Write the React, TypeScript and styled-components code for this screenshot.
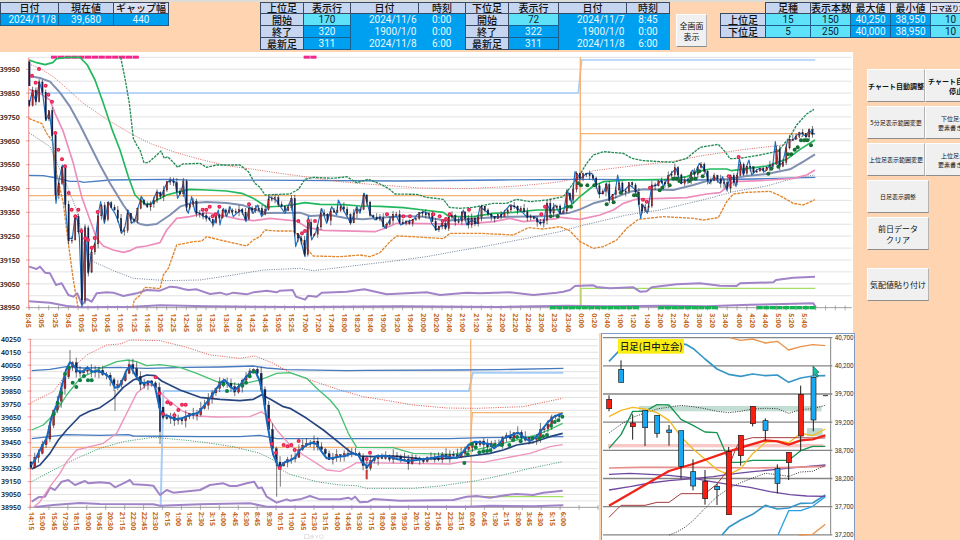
import React from "react";
import styled, { createGlobalStyle } from "styled-components";

const JP = `"Noto Sans CJK JP", "Noto Sans", sans-serif`;

const GlobalStyle = createGlobalStyle`
  * { box-sizing: border-box; }
  body { margin: 0; background: #ffd5b1; font-family: ${JP}; overflow-x: hidden; }
`;

const Page = styled.div`
  min-height: 100vh;
  background: #ffd5b1;
  overflow: hidden;
`;

const Header = styled.header`
  display: flex;
  align-items: flex-start;
  height: 52px;
  border-top: 2px solid #dcdcd8;
  overflow: hidden;
`;

const Slot = styled.div<{ $left?: number; $top?: number }>`
  flex: none;
  margin-left: ${(p) => p.$left ?? 0}px;
  margin-top: ${(p) => p.$top ?? 0}px;
`;

const Table = styled.table<{ $width: number }>`
  width: ${(p) => p.$width}px;
  table-layout: fixed;
  border-collapse: collapse;
  font-size: 10px;
  line-height: 11px;
  color: #111;

  thead th {
    height: 11px;
    line-height: 10px;
  }
`;

type Tone = "head" | "pale" | "blue" | "cyan" | "none";
const toneColor: Record<Tone, string> = {
  head: "#c6d6f1",
  pale: "#dcdff2",
  blue: "#00a0f0",
  cyan: "#5ee2fa",
  none: "transparent",
};

const cellBase = `
  height: 12px;
  padding: 0;
  font-weight: 400;
  white-space: nowrap;
`;

const Th = styled.th<{ $tone?: Tone; $small?: boolean }>`
  ${cellBase}
  background: ${(p) => toneColor[p.$tone ?? "head"]};
  border: ${(p) => (p.$tone === "none" ? "0" : "1px solid #3b4a63")};
  font-size: ${(p) => (p.$small ? 7 : 10)}px;
  font-weight: 500;
`;

const Td = styled.td<{ $tone: Tone; $plain?: boolean; $right?: boolean }>`
  ${cellBase}
  background: ${(p) => toneColor[p.$tone]};
  color: ${(p) => (p.$tone === "blue" ? "#e9f7ff" : "#10222e")};
  border: ${(p) => (p.$plain ? "0" : "1px solid #1d5f8c")};
  font-family: Roboto, sans-serif;
  text-align: ${(p) => (p.$right ? "right" : "center")};
  padding-right: ${(p) => (p.$right ? 2 : 0)}px;
`;

const SheetButton = styled.button<{ $w: number; $h: number; $size: number; $bold?: boolean }>`
  flex: none;
  width: ${(p) => p.$w}px;
  height: ${(p) => p.$h}px;
  padding: 0;
  border: 0;
  border-top: 1px solid #fff;
  border-left: 1px solid #fff;
  border-bottom: 1px solid #8d8d8d;
  border-right: 1px solid #b4b4b4;
  background: #f0f0f0;
  color: #111;
  font-family: ${JP};
  font-size: ${(p) => p.$size}px;
  font-weight: ${(p) => (p.$bold ? 700 : 400)};
  line-height: ${(p) => p.$size + 3}px;
  white-space: pre;
`;

const Body = styled.div`
  display: grid;
  grid-template-columns: minmax(0, 855fr) minmax(0, 105fr);
`;

const Charts = styled.main`
  min-width: 0;
`;

const UpperPanel = styled.section`
  margin-right: 2px;
  background: #fff;
`;

const LowerRow = styled.div`
  display: grid;
  grid-template-columns: minmax(0, 599fr) minmax(0, 254fr);
  column-gap: 2px;
`;

const LowerPanel = styled.section`
  background: #fff;
`;

const DailyPanel = styled.section`
  background: #fff;
  border: 1px solid #7f9cc4;
  border-bottom: 0;
`;

const ChartSvg = styled.svg`
  display: block;
  width: 100%;
  height: auto;
`;

const AxisText = styled.text<{ $size: number }>`
  font-family: "Noto Sans", sans-serif;
  font-size: ${(p) => p.$size}px;
  font-weight: 600;
  fill: #1b1b1b;
`;

const TimeText = styled.text`
  font-family: "Noto Sans", sans-serif;
  font-size: 22px;
  font-weight: 700;
  fill: #c5691c;
`;

const DailyText = styled.text`
  font-family: Roboto, sans-serif;
  font-size: 19px;
  fill: #333;
`;

const DailyTitle = styled.text`
  font-family: ${JP};
  font-size: 28px;
  font-weight: 500;
  fill: #222;
`;

const Sidebar = styled.aside`
  display: flex;
  flex-direction: column;
  gap: 4px;
  padding: 17px 0 0 12px;
  overflow: hidden;
`;

const ButtonRow = styled.div<{ $gapTop?: number }>`
  display: flex;
  margin-top: ${(p) => p.$gapTop ?? 0}px;
`;

/* ---------- chart helpers ---------- */

type Pt = [number, number];

const parse = (s: string, dx = 0): Pt[] =>
  s
    .trim()
    .split(/\s+/)
    .map((p) => {
      const [x, y] = p.split(",").map(Number);
      return [x + dx, y] as Pt;
    });

const join = (...parts: Pt[][]): Pt[] => ([] as Pt[]).concat(...parts);
const str = (pts: Pt[]) => pts.map((p) => p.join(",")).join(" ");

const valueAt = (pts: Pt[], x: number) => {
  if (x <= pts[0][0]) return pts[0][1];
  for (let i = 1; i < pts.length; i++) {
    if (x <= pts[i][0]) {
      const [x0, y0] = pts[i - 1];
      const [x1, y1] = pts[i];
      return y0 + ((y1 - y0) * (x - x0)) / (x1 - x0 || 1);
    }
  }
  return pts[pts.length - 1][1];
};

const noise = (i: number) => {
  const v = Math.sin(i * 12.9898) * 43758.5453;
  return v - Math.floor(v);
};

function Line({ pts, c, w = 3, dash }: { pts: Pt[]; c: string; w?: number; dash?: string }) {
  return (
    <polyline
      points={str(pts)}
      fill="none"
      stroke={c}
      strokeWidth={w}
      strokeDasharray={dash}
      strokeLinejoin="round"
    />
  );
}

function Dots({ pts, c }: { pts: Pt[]; c: string }) {
  return (
    <g fill={c}>
      {pts.map(([x, y], i) => (
        <circle key={i} cx={x} cy={y} r={6} />
      ))}
    </g>
  );
}

function RingDots({ pts }: { pts: Pt[] }) {
  return (
    <g fill="#e8204f">
      {pts.map(([x, y], i) => (
        <g key={i}>
          <circle cx={x} cy={y} r={6} />
          <circle cx={x} cy={y} r={1.5} fill="#ff9db4" />
        </g>
      ))}
    </g>
  );
}

function Candles({ pts, step, width, wick, jitter }: { pts: Pt[]; step: number; width: number; wick: number; jitter: number }) {
  const start = pts[0][0];
  const end = pts[pts.length - 1][0];
  const count = Math.floor((end - start) / step);
  return (
    <g>
      {Array.from({ length: count + 1 }, (_, i) => {
        const x = start + i * step;
        const open = valueAt(pts, x - step) + (noise(i) - 0.5) * jitter;
        const close = valueAt(pts, x) + (noise(i + 1) - 0.5) * jitter;
        const top = Math.min(open, close);
        const bottom = Math.max(open, close, top + 3);
        const up = close < open;
        return (
          <g key={i}>
            <line
              x1={x}
              x2={x}
              y1={top - noise(i + 400) * wick}
              y2={bottom + noise(i + 900) * wick}
              stroke="#2a2a33"
              strokeWidth={2}
            />
            <rect
              x={x - width / 2}
              y={top}
              width={width}
              height={bottom - top}
              fill={up ? "#b3262a" : "#14224d"}
              stroke={up ? "#3a1518" : "#101a3c"}
              strokeWidth={1}
            />
          </g>
        );
      })}
    </g>
  );
}

function Blocks({ from, to, y, h, c, step = 19.7 }: { from: number; to: number; y: number; h: number; c: string; step?: number }) {
  const n = Math.max(1, Math.round((to - from) / step));
  const w = (to - from) / n;
  return (
    <g fill={c}>
      {Array.from({ length: n }, (_, i) => (
        <rect key={i} x={from + i * w} y={y} width={w - 1.5} height={h} />
      ))}
    </g>
  );
}

const clock = (minutes: number) => {
  const m = minutes % 1440;
  return `${Math.floor(m / 60)}:${String(m % 60).padStart(2, "0")}`;
};

function TimeAxis({ labels, x0, step, y }: { labels: string[]; x0: number; step: number; y: number }) {
  return (
    <g>
      {labels.map((t, i) => (
        <TimeText key={i} transform={`translate(${x0 + i * step - 8} ${y}) rotate(90)`}>
          {t}
        </TimeText>
      ))}
    </g>
  );
}

function Grid({ x1, x2, y1, y2, rows, every, axisX, ticks }: { x1: number; x2: number; y1: number; y2: number; rows: number; every: number; axisX: number; ticks: number }) {
  const h = (y2 - y1) / rows;
  return (
    <g>
      {Array.from({ length: rows }, (_, i) => (
        <line key={i} x1={x1} x2={x2} y1={y1 + i * h} y2={y1 + i * h} stroke="#dcdcdc" strokeWidth={2.5} />
      ))}
      <line x1={x1} x2={x2} y1={y2} y2={y2} stroke="#8b8b8b" strokeWidth={2.5} />
      {Array.from({ length: Math.floor((x2 - x1) / ticks) + 1 }, (_, i) => (
        <line key={i} x1={x1 + i * ticks} x2={x1 + i * ticks} y1={y2 - 7} y2={y2 + 8} stroke="#8b8b8b" strokeWidth={2} />
      ))}
      <line x1={axisX} x2={axisX} y1={y1} y2={y2} stroke="#ef8f8f" strokeWidth={3} />
      {Array.from({ length: Math.floor(rows / 2) + 1 }, (_, i) => {
        const y = y2 - i * every;
        return <line key={i} x1={axisX - 8} x2={axisX + 3} y1={y} y2={y} stroke="#e07070" strokeWidth={2} />;
      })}
    </g>
  );
}

/* ---------- five-minute chart ---------- */

const B = 840;
const C = 1680;

const fine = {
  price: join(
    parse("88,160 97,125 108,155 118,95 128,130 138,212 148,185 158,270 168,460 175,400 187,345 197,480 205,565 217,565 225,500 232,510 238,560 246,770 255,530 265,670 275,600 285,580 295,490 302,455 313,520 325,455 335,475 345,490 355,515 365,550 375,530 384,480 395,520 405,510 415,470 425,440 437,465 455,462 470,425 485,435 500,400 510,390 525,395 533,445 541,430 550,400 560,480 565,490 575,440 585,485 600,490 610,500 622,500 640,525 655,480 660,525 670,475 680,500 690,470 700,500 710,490 725,480 738,515 748,470 760,490 772,465 785,500 800,480 808,440 818,445 828,450 838,465"),
    parse("15,490 35,445 47,590 58,555 75,620 85,500 95,570 108,545 125,475 140,520 155,470 170,495 175,450 190,480 212,520 230,470 240,490 253,430 270,490 285,510 300,500 315,535 335,500 350,500 362,525 380,515 400,510 410,495 430,485 445,490 455,520 470,540 485,525 500,530 510,490 525,510 540,510 550,480 560,525 575,510 590,520 600,470 620,485 640,500 660,500 690,465 705,470 725,485 740,500 765,500 780,520 792,515 800,460 812,485 825,465 838,488", B),
    parse("0,490 10,490 22,420 35,460 45,365 62,385 80,370 95,370 105,395 115,430 130,430 140,400 148,445 165,430 173,375 182,425 195,420 208,405 215,410 232,425 242,505 250,465 262,490 275,410 290,405 305,390 310,410 325,380 348,355 362,400 385,390 398,360 405,370 418,340 435,360 448,400 462,380 480,400 488,380 500,420 510,380 520,385 528,410 538,325 550,375 567,330 575,375 590,360 600,355 615,365 630,345 638,350 646,275 655,345 668,340 683,270 700,270 710,255 725,250 740,260 747,240 755,250 765,252", C),
  ),
  green: join(
    parse("87,30 110,38 135,44 158,38 170,26 200,22 240,22 262,45 285,90 310,160 335,235 360,300 385,380 405,435 420,450 438,463 455,460 475,448 500,435 530,427 570,418 620,420 680,423 725,430 760,445 800,471 850,468"),
    parse("40,464 75,458 120,463 190,464 240,468 300,469 370,473 430,480 490,487 505,498 540,500 580,500 640,490 700,487 770,480 820,480", B),
    parse("0,478 30,468 60,440 100,408 130,395 200,390 330,388 380,380 410,365 450,357 500,357 515,362 560,356 620,348 680,328 720,298 765,270", C),
  ),
  slate: join(
    parse("87,78 120,84 150,95 180,128 210,170 240,225 270,285 300,345 330,400 370,465 400,508 420,522 440,526 470,522 510,495 540,470 570,460 620,456 680,459 730,466 760,477 800,489"),
    parse("60,488 90,498 150,495 200,505 250,508 300,503 370,498 430,500 500,512 560,508 620,503 700,500 820,498", B),
    parse("0,492 30,488 60,478 100,460 160,445 210,425 250,418 340,420 400,405 450,390 500,388 560,378 620,372 690,358 730,335 765,313", C),
  ),
  pink: join(
    parse("87,118 120,130 150,150 165,190 190,245 220,340 245,440 270,510 290,565 310,588 340,600 370,607 390,602 410,592 440,588 480,578 500,540 530,505 570,500 620,488 660,495 720,508 760,512 810,505"),
    parse("50,513 80,532 130,541 285,545 315,535 350,520 440,521 550,523 640,515 690,505 730,515 830,506", B),
    parse("0,502 60,508 120,495 160,480 190,460 230,447 310,445 380,443 440,432 480,428 505,408 520,395 600,392 700,385 740,375 765,360", C),
  ),
  redDots: join(
    parse("87,42 120,55 160,80 200,115 250,160 320,208 400,255 450,280 520,305 600,328 680,347 760,358 840,370"),
    parse("60,378 180,395 260,402 340,408 420,414 560,416 700,409 800,400", B),
    parse("0,395 60,383 100,362 200,350 350,332 420,318 540,300 600,293 670,285 720,262 765,235", C),
  ),
  navyDots: join(
    parse("87,248 150,290 200,405 230,480 250,580 280,635 340,662 400,685 500,692 600,690 700,675 790,660"),
    parse("60,655 100,662 200,650 350,632 440,620 520,605 620,588 740,565", B),
    parse("0,545 60,528 200,495 300,480 440,447 520,425 620,408 700,385 765,375", C),
  ),
  greenDash: join(
    parse("362,22 375,85 388,160 400,265 410,285 420,300 432,338 445,338 465,320 483,303 493,325 503,320 518,335 533,352 548,342 600,340 620,352 650,345 720,345 745,365 765,400 780,412 795,435"),
    parse("0,433 30,432 55,418 75,388 100,382 160,385 200,380 230,398 265,388 300,402 325,415 345,432 410,433 440,442 490,448 508,472 540,475 580,472 640,460 680,460 710,448 750,455 800,450", B),
    parse("10,440 62,370 80,340 100,315 130,305 190,310 215,325 250,332 340,337 380,325 420,292 475,283 495,305 510,326 540,325 600,315 655,303 690,260 710,225 740,192 762,178", C),
  ),
  orangeA: parse("87,205 110,215 125,220 140,250 158,275 170,370 190,460 205,580 220,690 234,772"),
  orangeB: join(
    parse("398,772 403,750 418,738 435,712 480,716 490,675 505,655 530,585 580,575 605,573 620,560 660,570 740,588 760,570 780,560 795,540 830,543"),
    parse("40,543 60,560 75,590 100,618 180,620 240,615 270,620 300,608 330,575 350,558 400,560 490,566 510,550 600,550 700,555 745,533 790,537", B),
    parse("0,530 30,543 60,575 100,595 130,590 170,570 200,535 235,508 310,500 400,505 430,510 475,503 500,455 520,432 560,427 630,424 660,437 700,460 730,465 765,449", C),
  ),
  blue: parse("87,376 130,377 170,384 210,394 240,394 250,397 330,390 500,388 560,390 900,391 1200,393 1500,390 1740,388 2100,390 2300,386 2446,382"),
  purple: join(
    parse("87,650 110,657 120,650 135,668 150,670 168,705 185,700 205,735 220,740 232,730 246,765 260,747 275,755 290,730 320,727 340,728 370,738 410,730 440,720 480,722 510,710 530,712 550,717 565,720 590,718 630,732 660,728 680,734 700,728 740,733 760,727 800,722 830,727"),
    parse("0,722 38,720 48,740 75,749 85,737 110,740 125,728 200,725 253,718 320,733 440,727 480,735 560,728 600,730 690,727 760,735 830,728", B),
    parse("10,725 30,720 45,708 100,706 110,711 150,715 220,712 240,725 260,724 275,712 350,703 420,700 480,707 530,708 540,700 640,697 648,690 700,683 765,680", C),
  ),
  purpleLow: parse("87,754 150,758 200,768 246,772 400,770 480,766 620,769 900,771 1200,769 1500,771 1700,767 1820,769 2000,767 2120,769 2250,764 2350,762 2440,760 2447,772"),
  red: join(
    parse("96,77 117,57 107,98 137,107 145,134 156,155 166,249 175,299 186,328 195,349 206,429 215,479 226,499 235,479 244,543 256,565 264,570 275,593 284,564 293,486 608,479 619,479 629,470 638,499 647,493 658,470 747,463"),
    parse("55,513 66,550 75,543 85,513 105,513 321,493 370,499 390,499 460,493 479,499 488,513 498,507 509,493 567,479 784,493 795,470", B),
    parse("249,449 260,455 270,413 506,379 536,321", C),
  ),
  greenPts: join(
    parse("812,499 833,499", B),
    parse("22,470 33,470 55,400 63,406 82,406 103,406 140,463 161,457 182,428 222,436 231,436 299,421 307,413 329,406 340,386 350,386 358,393 388,393 396,386 407,386 418,364 428,379 625,371 634,356 655,350 684,313 694,313 704,299 713,292 723,271 733,271 742,271 753,286", C),
  ),
};

const fineLabels = [
  ...Array.from({ length: 21 }, (_, i) => clock(525 + i * 20)),
  ...Array.from({ length: 39 }, (_, i) => clock(1020 + i * 20)),
];

function FineChart() {
  return (
    <ChartSvg viewBox="0 6 2559 843" role="img" aria-label="5分足チャート">
      <Grid x1={87} x2={2555} y1={22} y2={773} rows={21} every={71.5} axisX={86} ticks={29.5} />
      {Array.from({ length: 11 }, (_, i) => (
        <AxisText key={i} $size={21} x={59} y={66 + i * 71.5} textAnchor="end">
          {39950 - i * 100}
        </AxisText>
      ))}
      <TimeAxis labels={fineLabels} x0={87} step={39.46} y={790} />
      <Blocks from={153} to={418} y={17} h={9} c="#f0288c" />
      <Blocks from={911} to={951} y={17} h={9} c="#f0288c" />
      <Line pts={parse("87,129 1735,129 1745,30 2446,30")} c="#a6cdf8" w={5} />
      <Line pts={parse("87,437 1739,437 1742,251 2446,251")} c="#f5b273" w={4} />
      <Line pts={parse("1741,22 1741,773")} c="#f5b273" w={4} />
      <Line pts={parse("1743,773 1743,715 2446,715")} c="#a4de62" w={4} />
      <Line pts={fine.purple} c="#a184c8" w={6} />
      <Line pts={fine.purpleLow} c="#a184c8" w={6} />
      <Line pts={fine.blue} c="#4a7dc4" w={4} />
      <Line pts={fine.navyDots} c="#6f7f95" w={3} dash="3 4" />
      <Line pts={fine.redDots} c="#dc6a62" w={3} dash="3 4" />
      <Line pts={fine.orangeA} c="#e0862f" w={4} dash="9 3" />
      <Line pts={fine.orangeB} c="#e0862f" w={4} dash="9 3" />
      <Line pts={fine.greenDash} c="#248a56" w={4} dash="8 3" />
      <Line pts={fine.pink} c="#ec8dbb" w={5} />
      <Line pts={fine.slate} c="#8090b2" w={6} />
      <Line pts={fine.green} c="#22b95e" w={5} />
      <line x1={88} x2={88} y1={34} y2={108} stroke="#14224d" strokeWidth={6} />
      <Line pts={fine.price} c="#1f6fc0" w={3.5} />
      <Candles pts={fine.price} step={9.83} width={4} wick={14} jitter={16} />
      <RingDots pts={fine.red} />
      <Dots pts={fine.greenPts} c="#176b35" />
      <Blocks from={1650} to={1918} y={768} h={10} c="#16b455" />
      <Blocks from={1975} to={2155} y={768} h={10} c="#16b455" />
      <Blocks from={2270} to={2448} y={768} h={10} c="#16b455" />
    </ChartSvg>
  );
}

/* ---------- fifteen-minute chart ---------- */

const D = 870;

const coarse = {
  price: join(
    parse("93,405 105,390 125,350 140,325 155,260 170,225 185,170 198,120 210,97 222,108 232,122 250,125 262,112 275,125 295,123 318,133 330,145 345,173 357,170 370,145 380,120 392,108 400,125 415,150 430,160 450,155 465,170 480,240 490,255 505,258 525,268 545,265 570,255 595,248 610,230 630,205 650,175 665,155 675,150 690,170 705,180 720,165 735,145 750,128 765,122 778,150 790,200 800,270 812,340 820,375 838,415 850,400 862,392"),
    parse("0,392 15,382 30,360 50,345 65,338 80,342 95,365 110,385 125,385 145,380 165,378 185,370 205,375 215,395 232,410 245,395 260,378 290,378 320,387 350,393 380,390 420,385 460,378 480,382 500,383 520,365 535,345 555,335 575,338 600,343 612,355 625,345 640,325 665,315 685,308 705,325 720,333 740,320 755,300 775,275 795,258 818,250", D),
  ),
  navy: join(
    parse("95,417 120,405 150,370 175,330 200,300 240,258 270,243 300,233 340,205 370,172 400,150 440,135 465,137 485,153 540,180 600,202 660,208 720,212 760,208 785,194 810,207 850,230"),
    parse("0,235 50,265 100,300 150,340 180,365 210,378 250,380 280,377 330,380 400,387 480,385 540,378 600,370 640,360 680,345 730,337 780,320 818,310", D),
  ),
  green: join(
    parse("95,300 130,285 165,250 200,195 240,145 300,115 350,95 385,90 410,95 440,107 480,104 540,112 590,130 650,155 720,164 780,150 830,130"),
    parse("0,128 50,145 80,175 120,210 145,240 175,310 200,352 310,353 340,362 370,370 490,373 530,365 600,350 680,330 740,315 780,298 818,280", D),
  ),
  pink: join(
    parse("100,532 120,515 150,470 180,430 200,395 230,360 270,350 310,340 350,310 380,250 410,190 440,165 465,165 490,198 520,222 550,245 590,258 650,261 750,260 785,245 805,262 830,300"),
    parse("0,345 40,375 80,400 110,420 150,424 180,410 200,398 480,402 520,395 580,397 640,385 720,370 780,350 818,344", D),
  ),
  redDots: join(
    parse("95,217 160,185 200,130 260,75 320,45 360,42 390,30 480,32 560,52 630,75 720,85 765,78 820,100"),
    parse("0,128 60,150 150,180 220,200 300,213 370,225 470,234 560,235 700,230 770,215 818,205", D),
  ),
  greenDots: join(
    parse("95,455 160,420 230,385 300,355 370,335 460,322 550,330 620,338 700,350 780,370 820,390 845,420"),
    parse("0,433 80,455 150,465 200,467 230,475 370,475 450,468 560,452 640,435 720,415 818,395", D),
  ),
  purple: join(
    parse("95,515 115,502 135,500 150,473 165,480 185,455 205,450 225,465 255,453 265,460 300,457 330,460 345,472 370,460 390,450 400,463 440,465 460,467 480,495 500,480 520,488 600,480 630,465 670,460 690,468 710,468 740,460 762,455 775,475 785,472 800,500 830,518 860,508"),
    parse("0,512 30,508 60,498 90,508 150,508 175,503 185,508 195,500 210,517 235,515 250,507 330,512 490,510 530,500 560,498 600,503 650,495 680,492 730,495 760,488 818,482", D),
  ),
  purpleLow: parse("105,531 160,525 240,519 300,522 460,523 480,527 600,523 750,520 800,530 900,530 1400,530 1470,527 1600,529 1690,526"),
  red: join(
    parse("467,142 478,190 489,252 502,217 512,221 523,256 535,240 546,224 557,224 806,270 816,342 828,368 839,414 851,345 863,349 874,345 884,360 896,333"),
    parse("230,387 240,368", D),
  ),
  greenPts: join(
    parse("161,253 173,220 184,189 195,132 207,113 218,158 229,171 240,151 252,138 264,151 275,151 670,163 681,183 727,167 738,158 749,139 760,125"),
    parse("523,399 533,373 545,342 557,352 568,367 580,364 591,363 601,361 613,345 635,345 658,345 669,330 681,321 692,334 727,324 748,325 759,319 771,315 783,287 794,276 805,271 817,260", D),
  ),
};

const coarseLabels = [
  "14:15", "15:00", "15:45", "17:30", "18:15", "19:00", "19:45", "20:30", "21:15", "22:00", "22:45", "23:30",
  "0:15", "1:00", "1:45", "2:30", "3:15", "4:00", "4:45", "5:30", "8:45", "9:30", "10:15", "11:00",
  "11:45", "12:30", "13:15", "14:00", "14:45", "15:30", "17:15", "18:00", "18:45", "19:30", "20:15", "21:00",
  "21:45", "22:30", "23:15", "0:00", "0:45", "1:30", "2:15", "3:00", "3:45", "4:30", "5:15", "6:00",
];

function CoarseChart() {
  return (
    <ChartSvg viewBox="0 9 1797 621" role="img" aria-label="15分足チャート">
      <Grid x1={90} x2={1795} y1={28} y2={532} rows={26} every={38.77} axisX={91} ticks={56.8} />
      {Array.from({ length: 14 }, (_, i) => (
        <AxisText key={i} $size={21} x={63} y={36 + i * 38.77} textAnchor="end">
          {40250 - i * 100}
        </AxisText>
      ))}
      <TimeAxis labels={coarseLabels} x0={95} step={33.95} y={545} />
      <Line pts={parse("482,532 490,183 1407,183 1418,128 1690,128")} c="#a6cdf8" w={6} />
      <Line pts={parse("95,352 1410,352 1417,248 1690,248")} c="#f5b273" w={4} />
      <Line pts={parse("1412,28 1414,532")} c="#f5b273" w={4} />
      <Line pts={parse("1415,500 1690,500")} c="#a4de62" w={4} />
      <Line pts={coarse.purple} c="#a184c8" w={6} />
      <Line pts={coarse.purpleLow} c="#a184c8" w={6} />
      <Line pts={parse("95,122 150,118 200,110 250,114 360,112 440,115 560,112 660,111 760,108 800,114 860,119 1040,122 1100,121 1380,120 1500,119 1690,115")} c="#4679be" w={4} />
      <Line pts={parse("95,326 200,314 300,316 385,314 400,318 600,320 720,320 780,316 830,326 1350,326 1450,323 1690,320")} c="#4679be" w={4} />
      <Line pts={coarse.redDots} c="#dc5a52" w={3} dash="3 4" />
      <Line pts={coarse.greenDots} c="#3e9468" w={3} dash="3 4" />
      <Line pts={coarse.pink} c="#ec94bd" w={4} />
      <Line pts={coarse.green} c="#45c172" w={4} />
      <Line pts={coarse.navy} c="#26457f" w={5} />
      <Candles pts={coarse.price} step={11.32} width={6} wick={20} jitter={18} />
      <Line pts={parse("210,60 210,100")} c="#333333" w={2} />
      <Line pts={parse("345,180 345,242")} c="#333333" w={2} />
      <Line pts={parse("480,205 480,305")} c="#14224d" w={5} />
      <Line pts={parse("480,305 480,342")} c="#333333" w={2} />
      <Line pts={parse("830,380 830,500")} c="#333333" w={2} />
      <Line pts={parse("841,400 841,470")} c="#333333" w={2} />
      <Line pts={parse("1100,420 1100,448")} c="#c8352f" w={6} />
      <Line pts={coarse.price} c="#1468bd" w={6} />
      <RingDots pts={coarse.red} />
      <Dots pts={coarse.greenPts} c="#0f8043" />
      <g fill="none" stroke="#d6d6d6" strokeWidth={2}>
        <rect x={914} y={614} width={13} height={12} />
        <path d="M933 615 v11 M933 619 h9 M938 614 v12 M946 616 l8 8 M954 615 l-7 10" />
        <circle cx={964} cy={620} r={6} />
      </g>
    </ChartSvg>
  );
}

/* ---------- daily chart ---------- */

type Candle = [x: number, top: number, bottom: number, high: number, low: number, up: boolean];

const dailyCandles: Candle[] = [
  [57, 208, 236, 196, 244, true],
  [93, 118, 157, 91, 157, false],
  [128, 279, 290, 253, 329, true],
  [165, 241, 293, 241, 348, false],
  [201, 256, 310, 256, 323, false],
  [237, 300, 307, 285, 347, false],
  [273, 302, 409, 302, 446, false],
  [309, 425, 468, 388, 481, false],
  [345, 454, 506, 420, 524, true],
  [381, 469, 479, 462, 525, false],
  [416, 365, 554, 351, 554, true],
  [452, 316, 377, 316, 407, true],
  [488, 229, 281, 229, 289, true],
  [526, 272, 301, 265, 332, false],
  [562, 415, 460, 403, 490, false],
  [596, 367, 398, 367, 450, true],
  [632, 193, 318, 167, 362, true],
  [670, 142, 270, 142, 304, false],
];

function DailyChart() {
  return (
    <ChartSvg viewBox="36 12 756 618" role="img" aria-label="日足チャート">
      {Array.from({ length: 8 }, (_, i) => {
        const y = 23 + i * 84.5;
        return (
          <g key={i}>
            <line x1={39} x2={727} y1={y} y2={y} stroke="#858585" strokeWidth={4} />
            <DailyText x={791} y={y + 7} textAnchor="end">
              {`${(40700 - i * 500).toLocaleString("en-US")}`}
            </DailyText>
          </g>
        );
      })}
      <line x1={722} x2={722} y1={23} y2={614} stroke="#858585" strokeWidth={3} />
      <rect x={147} y={228} width={548} height={16} fill="#8fc3ad" opacity={0.55} />
      <rect x={651} y={294} width={47} height={25} fill="#8fc3ad" opacity={0.6} />
      <rect x={54} y={342} width={646} height={10} fill="#f58f8f" opacity={0.5} />
      <Line pts={parse("57,94 80,70 100,50 140,38 200,34 250,38 290,44 310,56 345,87 381,117 416,133 452,139 488,132 526,137 562,135 596,157 632,144 668,138 706,137")} c="#3796c8" w={5} />
      <Line pts={parse("420,23 452,31 488,27 526,39 562,34 596,60 632,50 668,44 706,47")} c="#e8934e" w={4} />
      <Line pts={parse("626,615 668,613 706,583")} c="#e8934e" w={4} />
      <Line pts={parse("396,615 416,592 452,570 488,553 526,526 562,537 596,534 632,520 668,519 706,495")} c="#3796c8" w={5} />
      <Line pts={parse("564,615 596,542 632,542 668,529 706,500")} c="#2aa0e4" w={4} />
      <Line pts={parse("57,433 120,430 180,433 237,436 300,443 360,454 416,463 480,472 540,485 600,494 650,498 706,499")} c="#7048a0" w={4} />
      <Line pts={parse("57,480 120,470 180,459 237,452 309,446 370,440 416,433 488,425 560,418 620,412 706,405")} c="#7048a0" w={4} />
      <Line pts={parse("57,414 150,412 300,412 500,414 600,412 706,409")} c="#e58e8c" w={5} />
      <Line pts={parse("57,309 93,283 128,262 165,249 201,237 237,231 273,226 309,230 345,236 381,244 416,248 452,244 488,237 526,235 562,236 596,250 632,239 668,236 706,226")} c="#333333" w={3} dash="3 4" />
      <Line pts={parse("238,615 260,606 285,592 310,571 345,535 381,500 416,476 452,458 488,444 526,430 562,434 596,439 632,426 668,424 706,406")} c="#333333" w={3} dash="3 4" />
      <Line pts={parse("57,355 93,314 128,244 165,244 201,224 237,225 273,268 309,286 345,306 381,308 406,366 416,397 452,397 488,391 596,391 632,362 668,349 706,349")} c="#159453" w={4} />
      <Line pts={parse("57,260 93,241 128,232 165,237 201,248 237,271 273,320 309,357 345,388 381,419 416,434 452,416 488,371 526,337 562,333 596,338 632,310 668,317 706,297")} c="#f5b921" w={4} />
      <Line pts={parse("57,562 93,526 165,526 201,517 237,517 273,491 345,491 381,462 410,425 440,350 452,332 488,323 600,323 706,324")} c="#a83a3c" w={3} />
      <Line pts={parse("57,527 237,423 309,402 409,367 452,353 526,331 562,334 596,344 632,331 668,328 706,316")} c="#f02418" w={7} />
      {dailyCandles.map(([x, top, bottom, high, low, up]) => (
        <g key={x} stroke="#1c1c1c">
          <line x1={x} x2={x} y1={high} y2={low} strokeWidth={3} />
          <rect x={x - 7} y={top} width={15} height={bottom - top} fill={up ? "#f81f12" : "#18a9f5"} strokeWidth={2} />
        </g>
      ))}
      <line x1={699} x2={714} y1={197} y2={197} stroke="#333" strokeWidth={3} />
      <path d="M669 108 L669 137 L675 132 L681 142 L685 139 L680 129 L687 127 Z" fill="#15c3a0" stroke="#0b5c50" strokeWidth={2} />
      <rect x={84} y={27} width={198} height={44} fill="#fbee12" />
      <DailyTitle x={90} y={60}>日足(日中立会)</DailyTitle>
    </ChartSvg>
  );
}

/* ---------- header tables ---------- */

function SummaryTable() {
  return (
    <Table $width={168}>
      <colgroup>
        <col style={{ width: 58 }} />
        <col style={{ width: 55 }} />
        <col style={{ width: 55 }} />
      </colgroup>
      <thead>
        <tr>
          <Th scope="col">日付</Th>
          <Th scope="col">現在値</Th>
          <Th scope="col" $tone="pale">ギャップ幅</Th>
        </tr>
      </thead>
      <tbody>
        <tr>
          <Td $tone="blue" $right>2024/11/8</Td>
          <Td $tone="blue">39,680</Td>
          <Td $tone="blue">440</Td>
        </tr>
      </tbody>
    </Table>
  );
}

const rangeRows = [
  ["開始", "170", "2024/11/6", "0:00", "72", "2024/11/7", "8:45"],
  ["終了", "320", "1900/1/0", "0:00", "322", "1900/1/0", "0:00"],
  ["最新足", "311", "2024/11/8", "6:00", "311", "2024/11/8", "6:00"],
];

function RangeTable() {
  return (
    <Table $width={409}>
      <colgroup>
        {[43, 47, 68, 47, 43, 50, 68, 43].map((w, i) => (
          <col key={i} style={{ width: w }} />
        ))}
      </colgroup>
      <thead>
        <tr>
          {["上位足", "表示行", "日付", "時刻", "下位足", "表示行", "日付", "時刻"].map((t, i) => (
            <Th key={i} scope="col">{t}</Th>
          ))}
        </tr>
      </thead>
      <tbody>
        {rangeRows.map((r, i) => (
          <tr key={i}>
            <Th scope="row">{r[0]}</Th>
            <Td $tone={i === 0 ? "cyan" : "blue"}>{r[1]}</Td>
            <Td $tone="blue" $plain $right>{r[2]}</Td>
            <Td $tone="blue" $plain>{r[3]}</Td>
            <Th>{r[0]}</Th>
            <Td $tone={i === 0 ? "cyan" : "blue"}>{r[4]}</Td>
            <Td $tone="blue" $plain $right>{r[5]}</Td>
            <Td $tone="blue" $plain>{r[6]}</Td>
          </tr>
        ))}
      </tbody>
    </Table>
  );
}

function LimitTable() {
  return (
    <Table $width={250}>
      <colgroup>
        {[45, 45, 40, 40, 40, 40].map((w, i) => (
          <col key={i} style={{ width: w }} />
        ))}
      </colgroup>
      <thead>
        <tr>
          <Th $tone="none" />
          <Th scope="col">足種</Th>
          <Th scope="col">表示本数</Th>
          <Th scope="col" $tone="pale">最大値</Th>
          <Th scope="col" $tone="pale">最小値</Th>
          <Th scope="col" $tone="pale" $small>コマ送り本数</Th>
        </tr>
      </thead>
      <tbody>
        {[
          ["上位足", "15", "150", "40,250", "38,950", "10"],
          ["下位足", "5", "250", "40,000", "38,950", "10"],
        ].map((r) => (
          <tr key={r[0]}>
            <Th scope="row">{r[0]}</Th>
            <Td $tone="cyan">{r[1]}</Td>
            <Td $tone="cyan">{r[2]}</Td>
            <Td $tone="blue">{r[3]}</Td>
            <Td $tone="blue">{r[4]}</Td>
            <Td $tone="cyan">{r[5]}</Td>
          </tr>
        ))}
      </tbody>
    </Table>
  );
}

export default function App() {
  return (
    <Page>
      <GlobalStyle />
      <Header>
        <Slot>
          <SummaryTable />
        </Slot>
        <Slot $left={91}>
          <RangeTable />
        </Slot>
        <Slot $left={6} $top={12}>
          <SheetButton $w={31} $h={33} $size={8}>{"全画面\n表示"}</SheetButton>
        </Slot>
        <Slot $left={13}>
          <LimitTable />
        </Slot>
      </Header>
      <Body>
        <Charts>
          <UpperPanel>
            <FineChart />
          </UpperPanel>
          <LowerRow>
            <LowerPanel>
              <CoarseChart />
            </LowerPanel>
            <DailyPanel>
              <DailyChart />
            </DailyPanel>
          </LowerRow>
        </Charts>
        <Sidebar>
          <ButtonRow>
            <SheetButton $w={58} $h={33} $size={7} $bold>チャート自動調整</SheetButton>
            <SheetButton $w={62} $h={33} $size={7} $bold>{"チャート自動調整\n停止"}</SheetButton>
          </ButtonRow>
          <ButtonRow>
            <SheetButton $w={58} $h={33} $size={6}>5分足表示範囲変更</SheetButton>
            <SheetButton $w={62} $h={33} $size={6}>{"下位足から\n要素書き換え"}</SheetButton>
          </ButtonRow>
          <ButtonRow>
            <SheetButton $w={58} $h={33} $size={6}>上位足表示範囲変更</SheetButton>
            <SheetButton $w={62} $h={33} $size={6}>{"上位足から\n要素書き換え"}</SheetButton>
          </ButtonRow>
          <ButtonRow>
            <SheetButton $w={62} $h={33} $size={6}>日足表示調整</SheetButton>
          </ButtonRow>
          <ButtonRow>
            <SheetButton $w={62} $h={33} $size={8}>{"前日データ\nクリア"}</SheetButton>
          </ButtonRow>
          <ButtonRow $gapTop={14}>
            <SheetButton $w={62} $h={33} $size={8}>気配値貼り付け</SheetButton>
          </ButtonRow>
        </Sidebar>
      </Body>
    </Page>
  );
}
